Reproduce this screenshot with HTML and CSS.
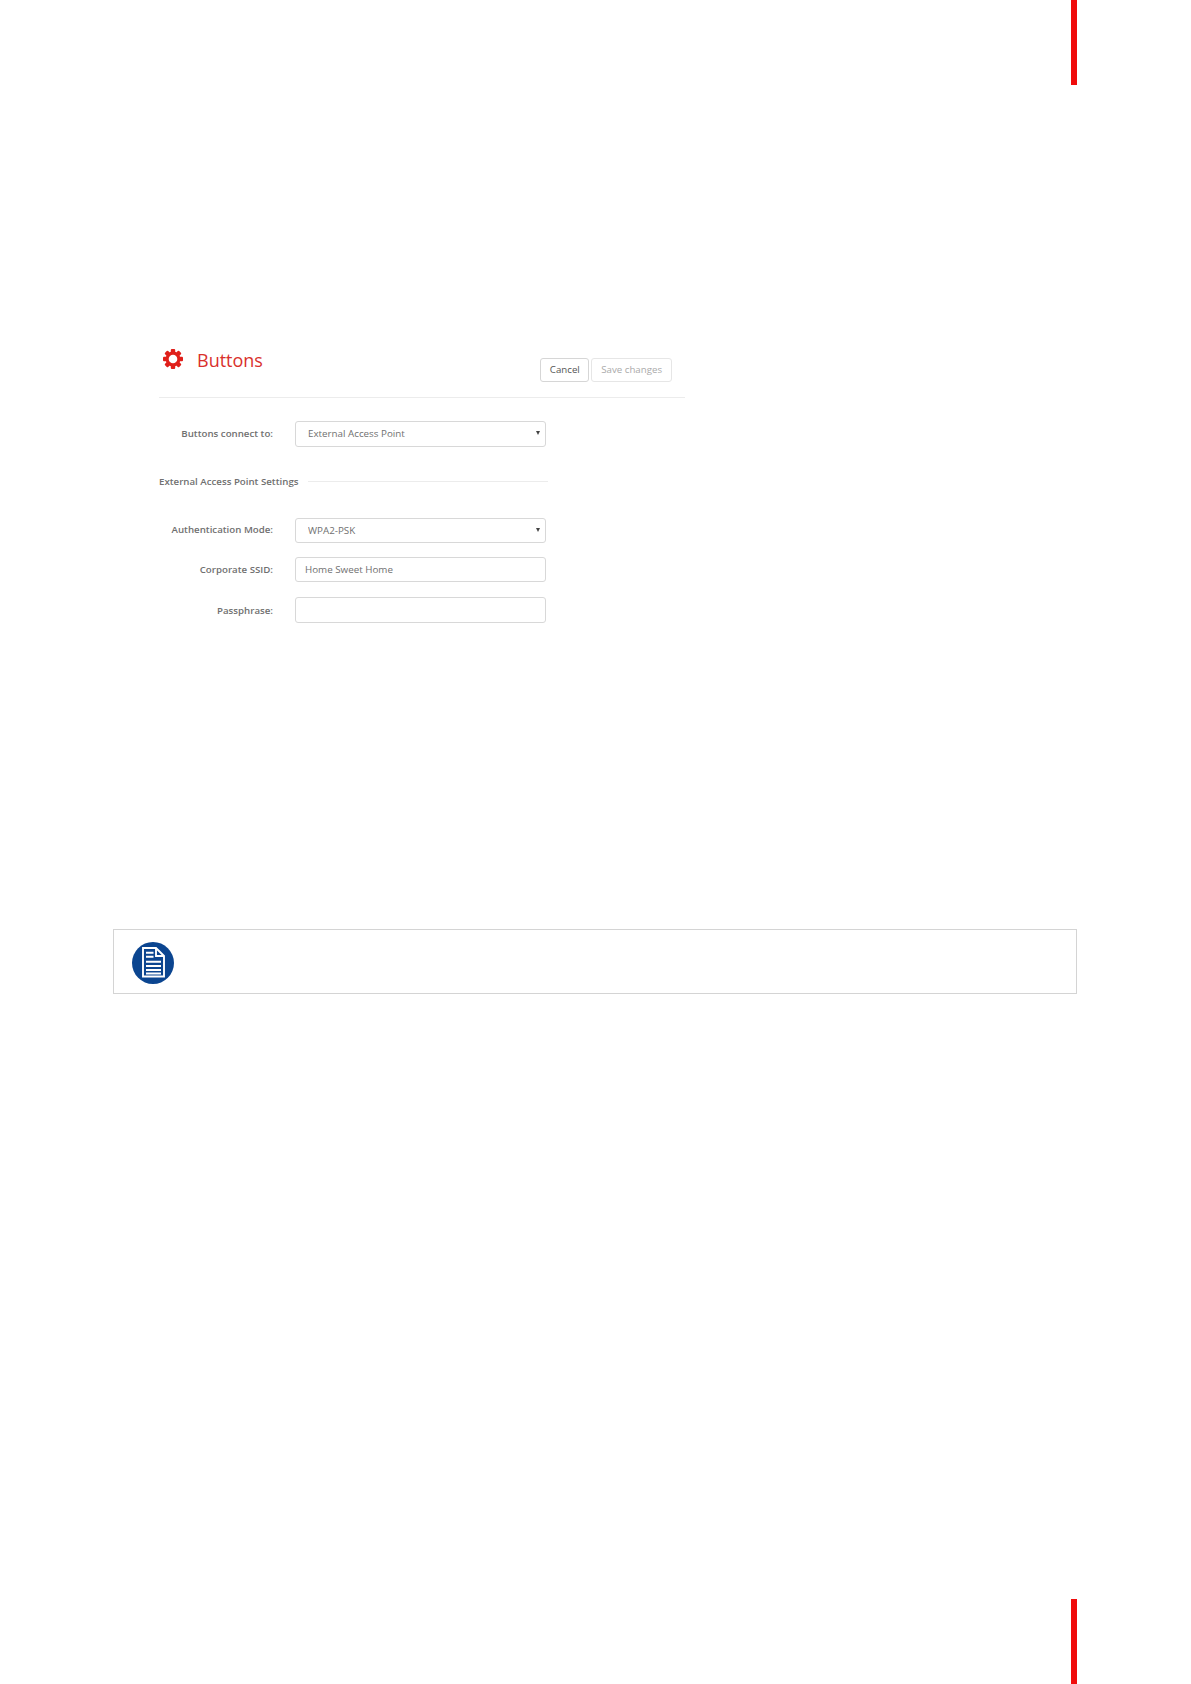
FILE: index.html
```html
<!DOCTYPE html>
<html lang="en">
<head>
<meta charset="utf-8">
<title>Buttons</title>
<link rel="stylesheet" href="styles.css">
</head>
<body>
<div class="page">
  <div class="bar bar-top"></div>
  <section class="panel">
    <header class="head">
      <h1 class="title">
        <svg class="gear" viewBox="0 0 20 20" aria-hidden="true">
          <g fill="#e0201b">
            <rect x="7.8" y="0" width="4.4" height="20" rx="1"/>
            <rect x="7.8" y="0" width="4.4" height="20" rx="1" transform="rotate(45 10 10)"/>
            <rect x="7.8" y="0" width="4.4" height="20" rx="1" transform="rotate(90 10 10)"/>
            <rect x="7.8" y="0" width="4.4" height="20" rx="1" transform="rotate(135 10 10)"/>
            <circle cx="10" cy="10" r="7.4"/>
          </g>
          <circle cx="10" cy="10" r="4.3" fill="#fff"/>
        </svg>
        <span>Buttons</span>
      </h1>
      <div class="actions">
        <button class="btn" type="button">Cancel</button>
        <button class="btn btn-off" type="button">Save changes</button>
      </div>
    </header>

    <div class="row row-first">
      <label class="lbl" for="conn">Buttons connect to:</label>
      <div class="pick">
        <select id="conn" class="field field-select"><option>External Access Point</option></select>
      </div>
    </div>

    <div class="legend"><span>External Access Point Settings</span><i class="legend-line"></i></div>

    <div class="row">
      <label class="lbl" for="auth">Authentication Mode:</label>
      <div class="pick">
        <select id="auth" class="field field-select"><option>WPA2-PSK</option></select>
      </div>
    </div>
    <div class="row">
      <label class="lbl" for="ssid">Corporate SSID:</label>
      <input id="ssid" class="field" type="text" value="Home Sweet Home">
    </div>
    <div class="row row-tall">
      <label class="lbl" for="pass">Passphrase:</label>
      <input id="pass" class="field" type="text">
    </div>
  </section>

  <aside class="note">
    <svg class="note-icon" viewBox="0 0 42 42" aria-hidden="true">
      <circle cx="21" cy="21" r="21" fill="#0b4590"/>
      <path d="M11 6h13l8 8v20.5H11z" fill="none" stroke="#fff" stroke-width="1.9"/>
      <path d="M24 6v8h8" fill="none" stroke="#fff" stroke-width="1.9"/>
      <path d="M14 10.7h7.5M14 14.7h7.5M14 19.7h15M14 24h15M14 28h15M14 31.5h15" fill="none" stroke="#fff" stroke-width="1.9"/>
    </svg>
  </aside>

  <div class="bar bar-bottom"></div>
</div>
</body>
</html>
```
FILE: styles.css
```css
* { box-sizing: border-box; }
html, body { margin: 0; padding: 0; background: #fff; }
body { font-family: "Open Sans", "Liberation Sans", sans-serif; }

.page {
  height: 1684px;
  padding: 0 114px 0 113px;
  display: flex;
  flex-direction: column;
}
.bar { width: 6px; height: 85px; background: #f00c0c; align-self: flex-end; }
.bar-bottom { margin-top: auto; }

.panel { width: 526px; margin: 255px 0 0 46px; }

.head {
  height: 58px;
  display: flex;
  justify-content: space-between;
  align-items: flex-start;
  border-bottom: 1px solid #ececec;
}
.title {
  margin: 10px 0 0 4px;
  display: flex;
  align-items: center;
  gap: 14px;
  font-size: 18px;
  font-weight: 400;
  line-height: 20px;
  color: #d9302c;
}
.gear { width: 20px; height: 20px; display: block; margin-top: -3px; }
.actions { display: flex; gap: 2px; margin: 18px 13px 0 0; }
.btn {
  height: 24px;
  padding: 0 8.5px;
  font: 400 9.7px/22px "Open Sans", sans-serif;
  color: #555;
  background: #fff;
  border: 1px solid #d6d6d6;
  border-radius: 3px;
}
.btn-off { padding: 0 9px; color: #aaa; border-color: #e6e6e6; }

.row {
  display: grid;
  grid-template-columns: 114px 251px;
  column-gap: 22px;
  align-items: center;
  height: 25px;
  margin-top: 15px;
}
.row-first { height: 26px; margin-top: 22px; }
.row-tall { height: 26px; }
.lbl {
  text-align: right;
  white-space: nowrap;
  justify-self: end;
  font-size: 9.7px;
  font-weight: 600;
  color: #707070;
}
.field {
  width: 251px;
  height: 100%;
  padding: 0 9px;
  font: 400 9.8px "Open Sans", sans-serif;
  color: #707070;
  background: #fff;
  border: 1px solid #d8d8d8;
  border-radius: 3px;
  outline: none;
}
.pick { position: relative; height: 100%; }
.pick::after {
  content: "";
  position: absolute;
  right: 6px;
  top: 50%;
  margin-top: -2px;
  border-left: 2.5px solid transparent;
  border-right: 2.5px solid transparent;
  border-top: 4px solid #444;
}
.field-select { appearance: none; -webkit-appearance: none; padding-left: 12px; }

.legend {
  display: flex;
  align-items: center;
  gap: 10px;
  height: 20px;
  margin: 25px 0 26px;
  width: 389px;
  font-size: 9.7px;
  font-weight: 600;
  color: #707070;
  white-space: nowrap;
}
.legend + .row { margin-top: 0; }
.legend-line { flex: 1; height: 1px; background: #ececec; }

.note {
  height: 65px;
  margin-top: 306px;
  padding: 12px 0 0 18px;
  border: 1px solid #d4d4d4;
}
.note-icon { width: 42px; height: 42px; display: block; }
```
